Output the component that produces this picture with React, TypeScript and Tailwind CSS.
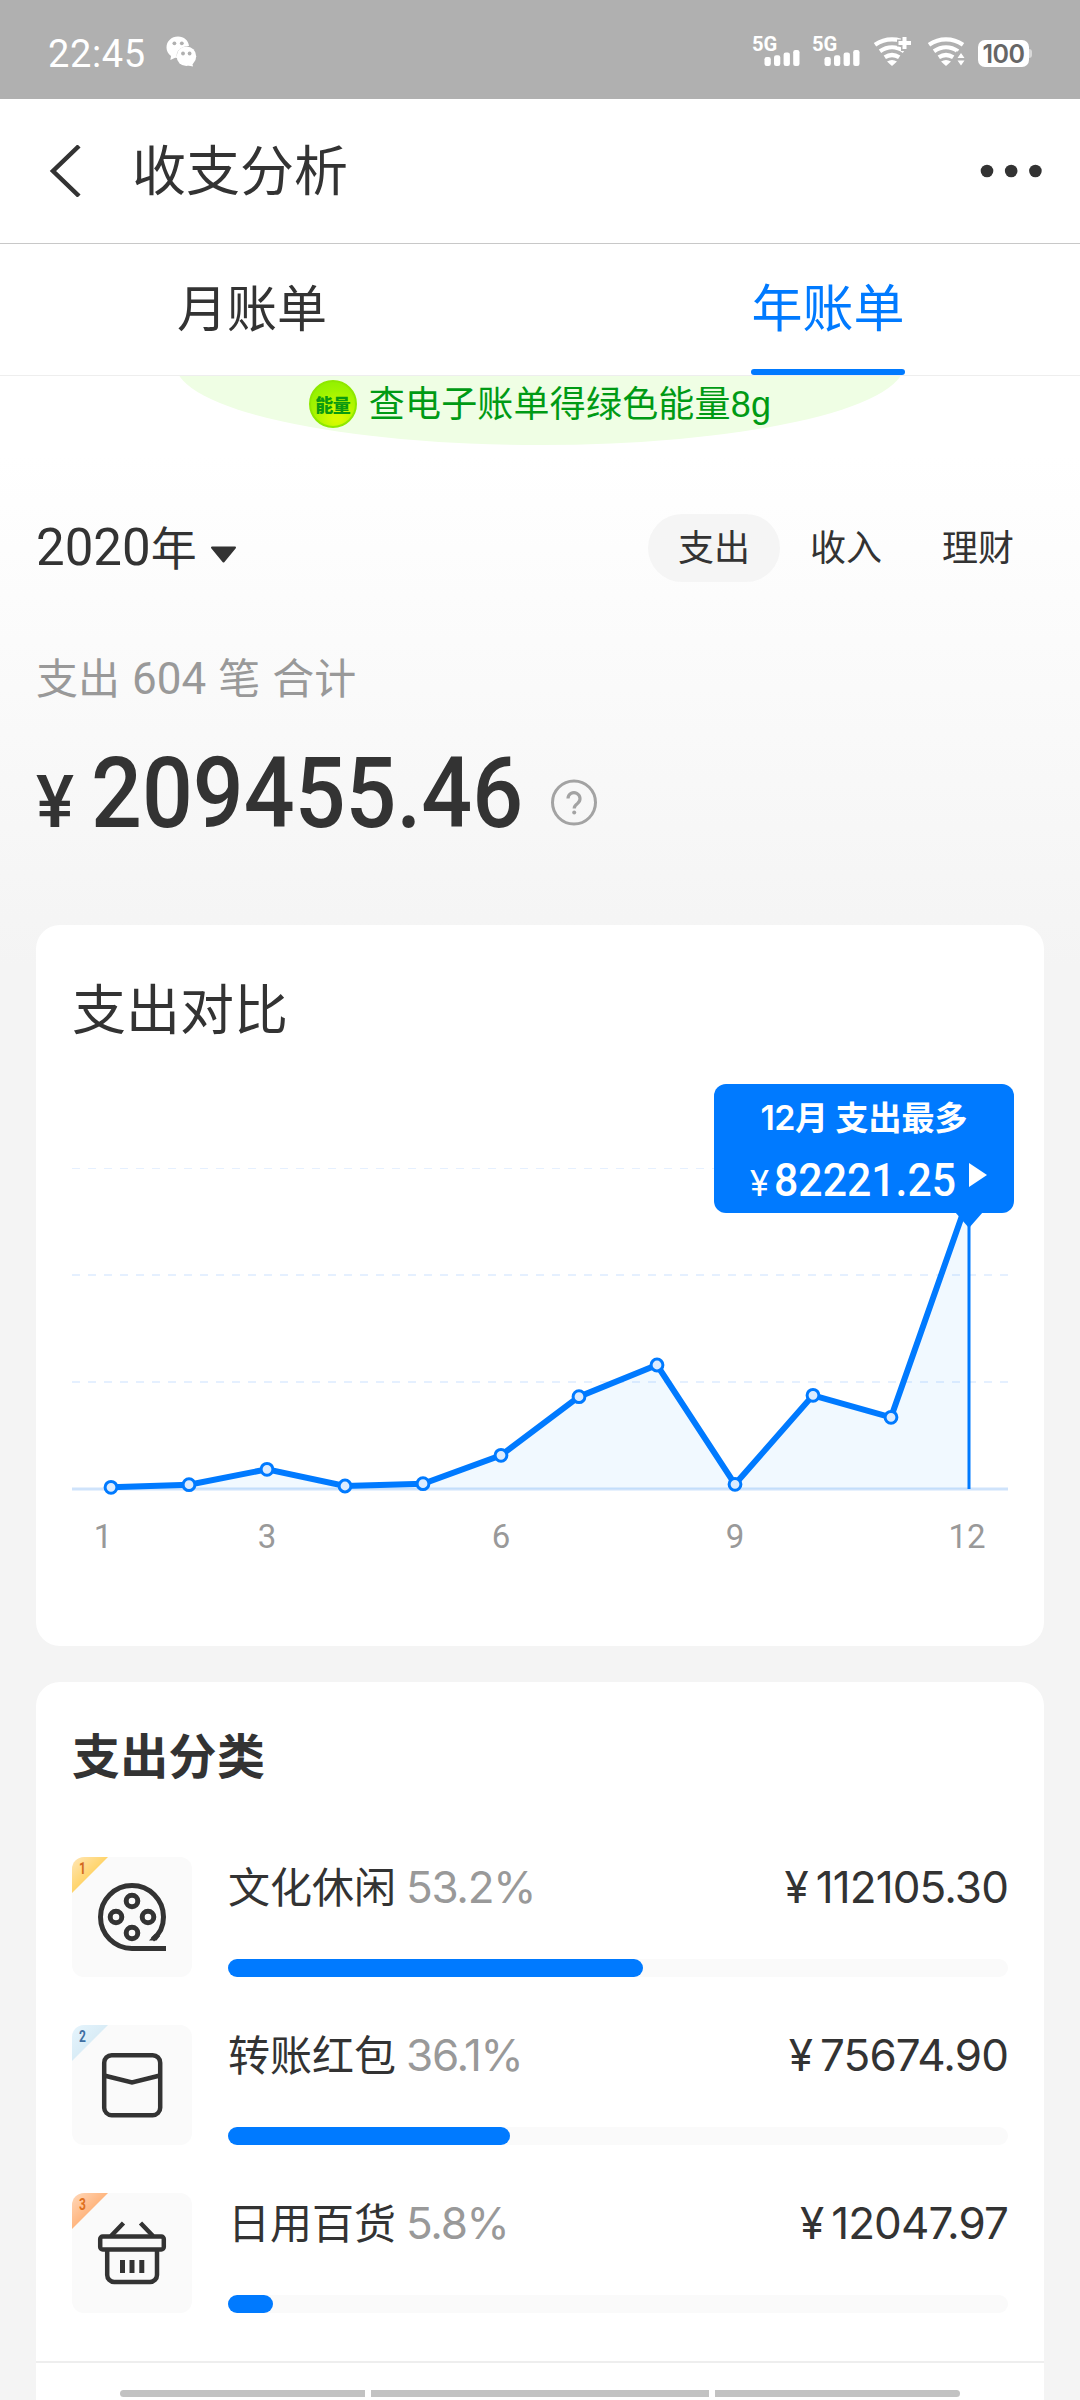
import type { ReactNode } from "react";

type Category = {
  rank: number;
  name: string;
  percent: number;
  amount: string;
  icon: ReactNode;
  badgeFrom: string;
  badgeTo: string;
  badgeText: string;
};

const POINTS = [
  [39, 403.3],
  [117, 400.7],
  [195, 385.3],
  [273, 402],
  [351, 399.7],
  [429, 371.3],
  [507, 312.7],
  [585, 281],
  [663, 400.3],
  [741, 311.3],
  [819, 333.3],
  [897, 112],
];

const MONTHS = [
  { label: "1", x: 31 },
  { label: "3", x: 195 },
  { label: "6", x: 429 },
  { label: "9", x: 663 },
  { label: "12", x: 895 },
];

const CATEGORIES: Category[] = [
  {
    rank: 1,
    name: "文化休闲",
    percent: 53.2,
    amount: "112105.30",
    icon: <FilmIcon />,
    badgeFrom: "#ffe7b8",
    badgeTo: "#ffd46b",
    badgeText: "#d2691e",
  },
  {
    rank: 2,
    name: "转账红包",
    percent: 36.1,
    amount: "75674.90",
    icon: <EnvelopeIcon />,
    badgeFrom: "#e6f5fd",
    badgeTo: "#d9ecf6",
    badgeText: "#3f6fa3",
  },
  {
    rank: 3,
    name: "日用百货",
    percent: 5.8,
    amount: "12047.97",
    icon: <BasketIcon />,
    badgeFrom: "#ffd9bb",
    badgeTo: "#ffb680",
    badgeText: "#e0701c",
  },
];

function FilmIcon() {
  return (
    <svg width="120" height="120" fill="none" stroke="#333" strokeWidth="5">
      <path d="M94 91.5H60A31.5 31.5 0 1 1 91.5 60C91.5 69 88 77 80.5 82.5" />
      <path d="M77 83.500L84.500 83.500L88 79L83 77Z" fill="#333" stroke="none" />
      <circle cx="60" cy="44" r="5.800" />
      <circle cx="60" cy="76" r="5.800" />
      <circle cx="44" cy="60" r="5.800" />
      <circle cx="76" cy="60" r="5.800" />
    </svg>
  );
}

function EnvelopeIcon() {
  return (
    <svg width="120" height="120" fill="none" stroke="#333" strokeWidth="4.5">
      <rect x="32.200" y="30.200" width="56" height="60" rx="7.500" />
      <path d="M32 50.500L60 57.500L88 50.500" />
    </svg>
  );
}

function BasketIcon() {
  return (
    <svg width="120" height="120" fill="none" stroke="#333" strokeWidth="4.5">
      <rect x="28.200" y="43.500" width="63.600" height="13" rx="2.500" />
      <path d="M35.200 57V82a7 7 0 0 0 7 7H78a7 7 0 0 0 7-7V57" />
      <path d="M39 43L51.500 30M81 43L68.500 30" />
      <path d="M50.500 67V80M60 67V80M69.800 67V80" strokeWidth="5" />
    </svg>
  );
}

function WechatIcon() {
  return (
    <svg width="32" height="32" viewBox="0 0 32 32" fill="#fff">
      <path d="M12 0.500C5.500 0.500 0.500 5.200 0.500 11.500c0 3.600 1.700 6.400 4.500 8.400L4.400 24l4.800-2.200 1.800.2c-1.700-6.800 3.700-11.700 12-12C22.500 4.500 18 0.500 12 0.500z" />
      <circle cx="20.400" cy="20.300" r="9.800" />
      <path d="M22 29.500l5 1-.8-4z" />
      <g fill="#b0b0b0">
        <circle cx="8.400" cy="7.300" r="1.900" />
        <circle cx="15.800" cy="7.300" r="1.900" />
        <circle cx="17" cy="17.500" r="1.900" />
        <circle cx="23.600" cy="17.500" r="1.900" />
      </g>
    </svg>
  );
}

function Signal() {
  return (
    <div className="relative h-[32px] w-[48px]">
      <span className="absolute -top-[3px] -left-px origin-left scale-x-[0.96] font-[Roboto] text-[21px] leading-[25px] font-bold">
        5G
      </span>
      <svg width="48" height="32" viewBox="0 0 48 32" fill="#fff">
        <rect x="11.500" y="22" width="6.300" height="9" rx="2.200" />
        <rect x="21" y="20.300" width="6.300" height="10.700" rx="2.200" />
        <rect x="30.600" y="17.600" width="6.300" height="13.400" rx="2.200" />
        <rect x="40.200" y="15" width="6.300" height="16" rx="2.200" />
      </svg>
    </div>
  );
}

function Wifi({ plus }: { plus?: boolean }) {
  return (
    <svg width="40" height="32" viewBox="0 0 40 32" fill="none">
      <g stroke="#fff" strokeWidth="4.200">
        <path d="M2 9.800C12.500 2.500 25.500 2.500 36 9.800" />
        <path d="M7 16.200C14.500 11 23.500 11 31 16.200" />
        <path d="M11.800 22.300C16.500 19.300 21.500 19.300 26.200 22.300" />
      </g>
      <path d="M14 26.500Q19 23.500 24 26.500L19 31Z" fill="#fff" />
      {plus ? (
        <>
          <path d="M31.500 0V16M24 8H40" stroke="#b0b0b0" strokeWidth="7" />
          <path d="M31.500 2V14M25.500 8H38" stroke="#fff" strokeWidth="4" />
        </>
      ) : (
        <>
          <path d="M29 16.500H40V32H29Z" fill="#b0b0b0" />
          <path d="M30.500 23L34 18L37.500 23ZM30.500 25.500L34 30.500L37.500 25.500Z" fill="#fff" />
        </>
      )}
    </svg>
  );
}

function StatusBar() {
  return (
    <div className="flex h-[99px] items-start bg-[#b0b0b0] pl-[48px] text-white">
      <span className="mt-[32px] w-[118px] font-[Roboto] text-[38px] leading-[44px] tracking-[0.6px]">
        22:45
      </span>
      <div className="mt-[36px]">
        <WechatIcon />
      </div>
      <div className="mt-[35px] ml-auto flex pr-[48px]">
        <div className="flex gap-[12px]">
          <Signal />
          <Signal />
        </div>
        <div className="ml-[12px] flex gap-[14px]">
          <Wifi plus />
          <Wifi />
        </div>
        <div className="mt-[4px] ml-[11px] flex items-center">
          <span className="flex h-[27px] w-[51px] items-center justify-center rounded-[7px] bg-white pt-px font-[Inter] text-[25px] leading-[26px] font-semibold tracking-[-0.5px] text-[#666]">
            100
          </span>
          <span className="h-[9px] w-[3px] rounded-r-[3px] bg-[#d8d8d8]" />
        </div>
      </div>
    </div>
  );
}

function Header() {
  return (
    <div className="flex h-[145px] items-center border-b border-[#c8c8c8] bg-white pr-[38px] pl-[48px]">
      <svg width="36" height="52" fill="none" stroke="#333" strokeWidth="4.500">
        <path d="M31 1L5 26L31 51" />
      </svg>
      <h1 className="ml-[48px] pb-[6px] text-[54px] leading-[60px] font-normal">
        收支分析
      </h1>
      <svg width="64" height="16" fill="#333" className="ml-auto">
        <circle cx="9" cy="8" r="6.300" />
        <circle cx="33.200" cy="8" r="6.300" />
        <circle cx="57.400" cy="8" r="6.300" />
      </svg>
    </div>
  );
}

function Tabs() {
  return (
    <div className="flex h-[132px] gap-[72px] border-b border-[#eee] bg-white text-[51px]">
      <div className="flex flex-1 justify-center">
        <span className="pt-[31px] text-[50px] leading-[60px]">月账单</span>
      </div>
      <div className="flex flex-1 justify-center">
        <span className="flex h-[131px] flex-col justify-between pt-[31px] leading-[60px] text-[#007aff]">
          年账单
          <i className="h-[6px] rounded-full bg-[#007aff]" />
        </span>
      </div>
    </div>
  );
}

function EnergyBanner() {
  return (
    <div className="relative flex h-[69px] justify-center overflow-hidden">
      <div className="absolute bottom-0 h-[160px] w-[728px] rounded-[50%] bg-[#effee4]" />
      <div className="relative flex items-start pt-[4px]">
        <span className="flex size-[48px] items-center justify-center rounded-full border-2 border-[#8fe800] bg-[radial-gradient(circle_at_60%_80%,#d8fb00_10%,#a0f400_60%,#8df000_90%)] text-[18px] font-black tracking-[-0.5px] text-[#0a9a10]">
          能量
        </span>
        <span className="ml-[12px] pt-px font-['Liberation_Sans','Noto_Sans_CJK_SC',sans-serif] text-[36px] leading-[48px] tracking-[0.2px] text-[#009a14]">
          查电子账单得绿色能量8g
        </span>
      </div>
    </div>
  );
}

function Summary() {
  return (
    <div className="h-[480px] px-[36px]">
      <div className="flex items-center justify-between pt-[69px]">
        <div className="flex h-[68px] items-baseline leading-[68px]">
          <span className="font-[Roboto] text-[51px] font-normal">2020</span>
          <span className="text-[46px] leading-[60px]">年</span>
          <svg width="30" height="20" fill="#333" className="ml-[12px]">
            <path
              d="M3 2.500H26L14.500 16.500Z"
              stroke="#333"
              strokeWidth="2"
              strokeLinejoin="round"
            />
          </svg>
        </div>
        <div className="flex text-center text-[36px] leading-[62px]">
          <span className="h-[68px] w-[132px] rounded-full bg-[#f5f5f5]">支出</span>
          <span className="w-[132px]">收入</span>
          <span className="w-[132px]">理财</span>
        </div>
      </div>
      <p className="mt-[64px] text-[42px] leading-[60px] whitespace-pre text-[#999]">
        支出
        <span className="mx-[12px] font-[Roboto] text-[44px] font-normal">604</span>笔
        <span className="ml-[12px]">合计</span>
      </p>
      <div className="mt-[39px] flex h-[92px] items-baseline font-[Roboto] font-medium">
        <span className="w-[55px] origin-left text-[73px] leading-[92px]">
          <span className="inline-block origin-left scale-x-[0.98]">¥</span>
        </span>
        <span className="w-[459px] origin-left scale-x-[0.914] text-[98px] leading-[92px]">
          209455.46
        </span>
        <svg width="50" height="48" fill="none" stroke="#a3a3a3" className="mt-[17px] self-center">
          <circle cx="24" cy="23.500" r="21.500" strokeWidth="3" />
          <path
            d="M18 19.500a6 6 0 1 1 9.500 5c-2.500 1.800-3.300 2.700-3.300 5"
            strokeWidth="3.200"
          />
          <circle cx="24.200" cy="33.500" r="2" fill="#a3a3a3" stroke="none" />
        </svg>
      </div>
    </div>
  );
}

function CompareCard() {
  const line = POINTS.map((p) => p.join(",")).join(" ");

  return (
    <section className="h-[721px] rounded-[24px] bg-white px-[36px] pt-[52px]">
      <h2 className="text-[54px] leading-[60px]">支出对比</h2>
      <div className="relative mt-[47px] h-[480px]">
        <svg width="936" height="480" className="absolute">
          <g stroke="#e5f0ff" strokeDasharray="8 8">
            <path d="M0 84.500H936" />
            <path d="M0 191H936" strokeWidth="2" />
            <path d="M0 298H936" strokeWidth="2" />
          </g>
          <path d="M0 405H936" stroke="#cfe3fb" strokeWidth="3" />
          <polygon points={`39,405 ${line} 897,405`} fill="#0090ff" fillOpacity="0.055" />
          <polyline points={line} fill="none" stroke="#007aff" strokeWidth="6" />
          <path d="M897 130V405" stroke="#007aff" strokeWidth="3" />
          {POINTS.slice(0, -1).map(([x, y]) => (
            <circle
              key={x}
              cx={x}
              cy={y}
              r="5.900"
              fill="#dcecff"
              stroke="#007aff"
              strokeWidth="3"
            />
          ))}
          <path d="M883 128H911L897 144Z" fill="#007aff" />
          {MONTHS.map((m) => (
            <text
              key={m.label}
              x={m.x}
              y="464"
              textAnchor="middle"
              fill="#999"
              fontSize="33"
              fontWeight="400"
              fontFamily="Roboto, sans-serif"
            >
              {m.label}
            </text>
          ))}
        </svg>
        <div className="absolute top-0 left-[642px] h-[129px] w-[300px] rounded-[12px] bg-[#007aff] text-white">
          <p className="pt-[10px] text-center text-[33px] leading-[44px] font-bold">
            <span className="font-[Inter] text-[34px] font-semibold tracking-[-0.5px]">
              12
            </span>
            月 支出最多
          </p>
          <div className="mt-[15px] flex items-baseline pl-[36px] font-[Roboto] leading-[50px]">
            <span className="w-[24px] text-[36px] font-normal">¥</span>
            <span className="w-[195px] origin-left scale-x-[0.93] text-[46px] font-medium">
              82221.25
            </span>
            <svg width="18" height="24" fill="#fff" className="-translate-y-[9px]">
              <path d="M0 0L18 12L0 24Z" />
            </svg>
          </div>
        </div>
      </div>
    </section>
  );
}

function CategoryRow({ item }: { item: Category }) {
  return (
    <div className="flex h-[120px] gap-[36px]">
      <div className="relative size-[120px] overflow-hidden rounded-[12px] bg-[#fafafa]">
        {item.icon}
        <div
          className="absolute top-0 left-0 size-[36px] pt-[4px] pl-[7px] font-[Roboto] text-[16px] leading-[16px] font-bold [clip-path:polygon(0_0,100%_0,0_100%)]"
          style={{
            background: `linear-gradient(135deg, ${item.badgeFrom}, ${item.badgeTo} 50%)`,
            color: item.badgeText,
          }}
        >
          <span className="inline-block origin-left scale-x-[0.75]">{item.rank}</span>
        </div>
      </div>
      <div className="flex flex-1 flex-col justify-between">
        <div className="flex items-baseline leading-[56px]">
          <span className="text-[42px]">{item.name}</span>
          <span className="ml-[10px] font-[Inter] text-[44px] font-normal tracking-[-1.3px] text-[#999]">
            {item.percent}%
          </span>
          <span className="ml-auto font-[Inter] text-[44px] font-normal tracking-[-0.9px]">
            <span className="mr-[8px]">¥</span>
            {item.amount}
          </span>
        </div>
        <div className="h-[18px] rounded-full bg-[#fafafa]">
          <div
            className="h-full rounded-full bg-[#007aff]"
            style={{ width: `${item.percent}%` }}
          />
        </div>
      </div>
    </div>
  );
}

function CategoryCard() {
  return (
    <section className="mt-[36px] h-[760px] rounded-t-[24px] bg-white">
      <div className="px-[36px] pt-[41px]">
        <h2 className="text-[48px] leading-[60px] font-bold tracking-[0.3px]">支出分类</h2>
        <div className="mt-[74px] flex flex-col gap-[48px]">
          {CATEGORIES.map((item) => (
            <CategoryRow key={item.rank} item={item} />
          ))}
        </div>
      </div>
      <div className="mt-[48px] h-[2px] bg-[#eee]" />
    </section>
  );
}

export default function App() {
  return (
    <div className="relative h-[2400px] w-[1080px] overflow-hidden bg-[#f4f4f4] font-['Noto_Sans_CJK_SC',sans-serif] text-[#333]">
      <StatusBar />
      <Header />
      <Tabs />
      <main className="bg-[linear-gradient(to_bottom,#fff_80px,#f4f4f4_590px)]">
        <EnergyBanner />
        <Summary />
        <div className="px-[36px]">
          <CompareCard />
          <CategoryCard />
        </div>
      </main>
      <div className="absolute bottom-[3px] left-[120px] flex h-[7px] w-[840px] gap-[6px] overflow-hidden rounded-full">
        <span className="w-[245px] bg-[#c2c2c2]" />
        <span className="w-[338px] bg-[#c2c2c2]" />
        <span className="w-[245px] bg-[#c2c2c2]" />
      </div>
    </div>
  );
}
